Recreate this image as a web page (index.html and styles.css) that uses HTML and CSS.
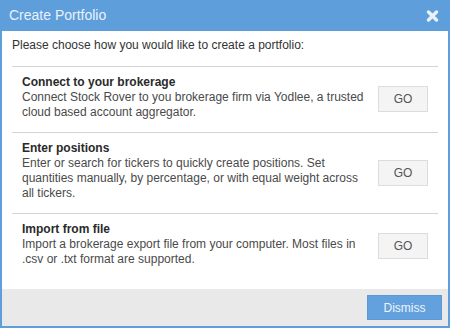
FILE: index.html
```html
<!DOCTYPE html>
<html lang="en">
<head>
    <meta charset="UTF-8">
    <meta name="viewport" content="width=device-width, initial-scale=1.0">
    <title>Create Portfolio</title>
    <link rel="stylesheet" href="styles.css">
</head>
<body>

    <div class="dialog">
        <div class="dialog-header">
            <span class="dialog-title">Create Portfolio</span>
            <span class="close-btn" title="Close">
                <svg width="13" height="12" viewBox="0 0 13 12">
                    <path d="M2.5 2 L10.5 10 M10.5 2 L2.5 10" stroke="currentColor" stroke-width="3.4" stroke-linecap="round"/>
                </svg>
            </span>
        </div>

        <div class="dialog-body">
            <div class="intro">Please choose how you would like to create a portfolio:</div>

            <div class="option">
                <div class="option-text">
                    <div class="option-title">Connect to your brokerage</div>
                    <div>Connect Stock Rover to you brokerage firm via Yodlee, a trusted cloud based account aggregator.</div>
                </div>
                <button class="go-btn">GO</button>
            </div>

            <div class="option">
                <div class="option-text">
                    <div class="option-title">Enter positions</div>
                    <div>Enter or search for tickers to quickly create positions. Set quantities manually, by percentage, or with equal weight across all tickers.</div>
                </div>
                <button class="go-btn">GO</button>
            </div>

            <div class="option">
                <div class="option-text">
                    <div class="option-title">Import from file</div>
                    <div>Import a brokerage export file from your computer. Most files in .csv or .txt format are supported.</div>
                </div>
                <button class="go-btn">GO</button>
            </div>
        </div>

        <div class="dialog-footer">
            <button class="dismiss-btn">Dismiss</button>
        </div>
    </div>

</body>
</html>
```

FILE: styles.css
```css
body {
    margin: 0;
    font-family: Arial, "Liberation Sans", sans-serif;
    font-size: 12px;
    color: #333;
    background-color: #fff;
}
.dialog {
    width: 446px;
    height: 326px;
    border: 2px solid #5e9edb;
    border-top: none;
    display: flex;
    flex-direction: column;
}
.dialog-header {
    height: 31px;
    background-color: #5e9edb;
    color: #e9f1fa;
    display: flex;
    align-items: center;
    justify-content: space-between;
    padding: 0 9px 0 7px;
}
.dialog-title {
    font-size: 14px;
    margin-top: -1px;
}
.close-btn {
    display: flex;
    width: 13px;
    height: 12px;
    margin-top: 1px;
    cursor: pointer;
}
.dialog-body {
    flex: 1;
    padding: 0 10px;
    line-height: 15px;
}
.intro {
    padding: 7px 0 13px;
    border-bottom: 1px solid #d4d4d4;
}
.option {
    display: flex;
    align-items: center;
    padding: 8px 10px 12px;
    border-bottom: 1px solid #d4d4d4;
    color: #4a4a4a;
}
.option:last-child {
    border-bottom: none;
}
.option-text {
    flex: 1;
    padding-right: 14px;
}
.option-title {
    font-weight: bold;
    color: #2a2a2a;
}
.go-btn {
    width: 50px;
    height: 26px;
    margin-top: 3px;
    background-color: #f4f4f4;
    border: 1px solid #dcdcdc;
    color: #555;
    font-family: inherit;
    font-size: 12px;
    padding: 0;
    cursor: pointer;
}
.dialog-footer {
    height: 37px;
    background-color: #e9e9e9;
    display: flex;
    align-items: center;
    justify-content: flex-end;
    padding-right: 6px;
}
.dismiss-btn {
    width: 75px;
    height: 25px;
    background-color: #62a1de;
    border: 1px solid #5a98d6;
    color: #eef4fb;
    font-family: inherit;
    font-size: 12px;
    padding: 0;
    cursor: pointer;
}
```
